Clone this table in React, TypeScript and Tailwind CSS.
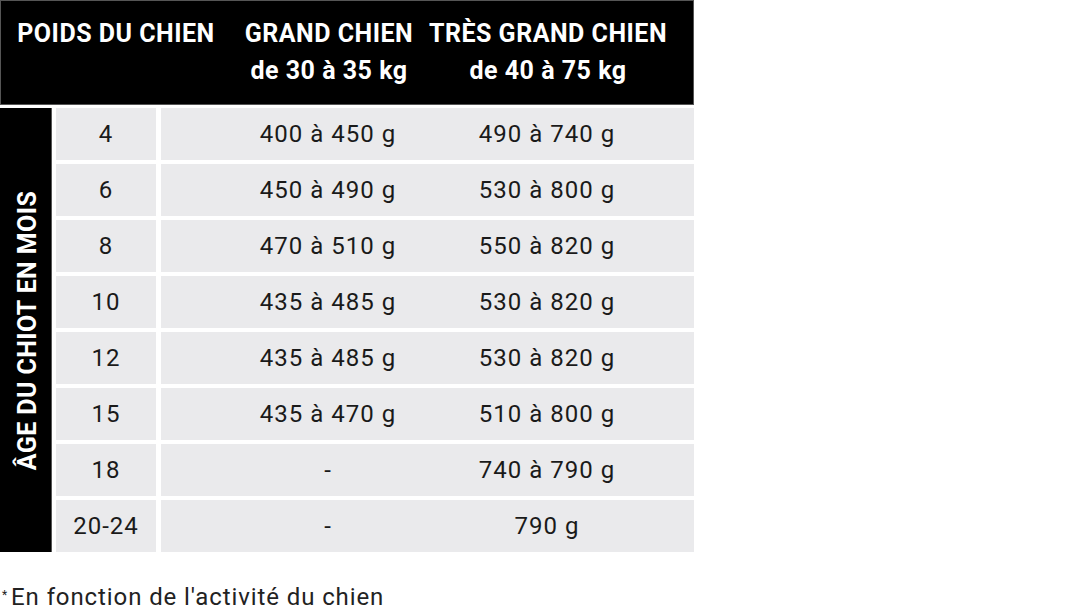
import React from 'react';

const ROWS: [string, string, string][] = [
  ['4', '400 à 450 g', '490 à 740 g'],
  ['6', '450 à 490 g', '530 à 800 g'],
  ['8', '470 à 510 g', '550 à 820 g'],
  ['10', '435 à 485 g', '530 à 820 g'],
  ['12', '435 à 485 g', '530 à 820 g'],
  ['15', '435 à 470 g', '510 à 800 g'],
  ['18', '-', '740 à 790 g'],
  ['20-24', '-', '790 g'],
];

export default function App() {
  return (
    <div className="w-[1081px] h-[614px] bg-white text-[#1a1a1a] font-['Roboto',sans-serif] overflow-hidden">
      {/* header */}
      <div className="w-[694px] h-[105px] bg-black border border-[#555] text-white font-bold text-[25px] tracking-[0.5px] leading-[37px] flex">
        <div className="w-[230px] text-center pt-[14px]">POIDS DU CHIEN</div>
        <div className="w-[196px] text-center pt-[14px]">
          <div>GRAND CHIEN</div>
          <div>de 30 à 35 kg</div>
        </div>
        <div className="w-[242px] text-center pt-[14px]">
          <div>TRÈS GRAND CHIEN</div>
          <div>de 40 à 75 kg</div>
        </div>
      </div>

      {/* body */}
      <div className="flex mt-[3px]">
        <div className="w-[52px] h-[444px] bg-black border-r border-[#555] flex items-center justify-center">
          <span className="-rotate-90 whitespace-nowrap text-white font-bold text-[25px] tracking-[0.4px] leading-none translate-x-[2px]">
            ÂGE DU CHIOT EN MOIS
          </span>
        </div>
        <div className="flex flex-col gap-[4px] ml-[4px]">
          {ROWS.map(([age, grand, tres]) => (
            <div key={age} className="flex gap-[5px] h-[52px] text-[24px] tracking-[1px]">
              <div className="w-[100px] bg-[#eaeaec] flex items-center justify-center">{age}</div>
              <div className="w-[533px] bg-[#eaeaec] flex items-center">
                <div className="w-[69px]" />
                <div className="w-[196px] text-center">{grand}</div>
                <div className="w-[242px] text-center">{tres}</div>
              </div>
            </div>
          ))}
        </div>
      </div>

      {/* footnote */}
      <div className="mt-[33px] ml-[2px] text-[24px] tracking-[0.9px] text-[#222] leading-none">
        <sup className="text-[12px] mr-[3px]">*</sup>En fonction de l'activité du chien
      </div>
    </div>
  );
}
